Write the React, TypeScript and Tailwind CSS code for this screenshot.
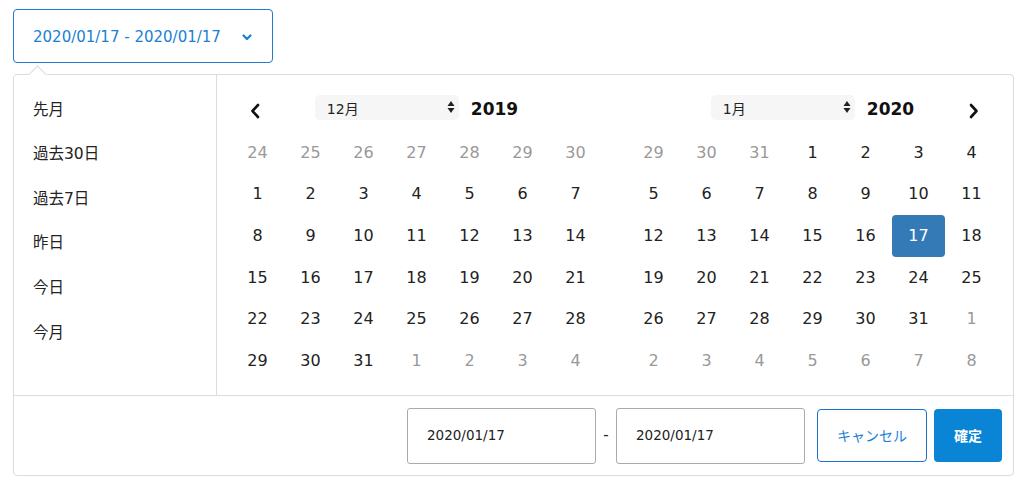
import React from "react";

const FONT = { fontFamily: '"DejaVu Sans", "Noto Sans CJK JP", sans-serif' };
const JP = { fontFamily: '"Noto Sans CJK JP", sans-serif' };

type Day = { d: number; muted?: boolean; sel?: boolean };

const dec: Day[] = [
  ...[24, 25, 26, 27, 28, 29, 30].map((d) => ({ d, muted: true })),
  ...Array.from({ length: 31 }, (_, i) => ({ d: i + 1 })),
  ...[1, 2, 3, 4].map((d) => ({ d, muted: true })),
];

const jan: Day[] = [
  ...[29, 30, 31].map((d) => ({ d, muted: true })),
  ...Array.from({ length: 31 }, (_, i) => ({ d: i + 1, sel: i + 1 === 17 })),
  ...[1, 2, 3, 4, 5, 6, 7, 8].map((d) => ({ d, muted: true })),
];

function SelectArrows() {
  return (
    <svg width="8" height="14" viewBox="0 0 8 14" className="absolute right-[4px] top-[5px]">
      <path d="M4 1 L7.5 6 L0.5 6 Z" fill="#222" />
      <path d="M4 13 L7.5 8 L0.5 8 Z" fill="#222" />
    </svg>
  );
}

function Chevron({ dir }: { dir: "left" | "right" }) {
  return (
    <svg width="10" height="16" viewBox="0 0 10 16">
      {dir === "left" ? (
        <path d="M8 2 L2.5 8 L8 14" stroke="#111" strokeWidth="2.6" fill="none" strokeLinecap="round" strokeLinejoin="round" />
      ) : (
        <path d="M2 2 L7.5 8 L2 14" stroke="#111" strokeWidth="2.6" fill="none" strokeLinecap="round" strokeLinejoin="round" />
      )}
    </svg>
  );
}

function Calendar({ month, year, days, side }: { month: string; year: string; days: Day[]; side: "left" | "right" }) {
  return (
    <div className="w-[371px]">
      <div className="relative flex h-[25px] items-center justify-center gap-[12px]">
        {side === "left" && (
          <div className="absolute left-[19px] top-[8px]">
            <Chevron dir="left" />
          </div>
        )}
        {side === "right" && (
          <div className="absolute right-[19px] top-[8px]">
            <Chevron dir="right" />
          </div>
        )}
        <div className="relative flex h-[25px] w-[144px] items-center rounded-[5px] bg-[#f6f6f6] pl-[12px] text-[14px] text-[#222]">
          <span className="translate-y-[2px]">{month}</span>
          <SelectArrows />
        </div>
        <div className="translate-y-[2px] text-[17px] font-bold text-[#111]">{year}</div>
      </div>
      <div className="mt-[12px] grid grid-cols-7">
        {days.map((x, i) => (
          <div
            key={i}
            className={
              "flex h-[41.6px] items-center justify-center text-[16px] " +
              (x.sel
                ? "rounded-[4px] bg-[#337ab7] text-white"
                : x.muted
                ? "text-[#999]"
                : "text-[#222]")
            }
          >
            {x.d}
          </div>
        ))}
      </div>
    </div>
  );
}

export default function App() {
  const presets = ["先月", "過去30日", "過去7日", "昨日", "今日", "今月"];
  return (
    <div className="h-[488px] w-[1024px] bg-white pl-[13px] pt-[9px]" style={FONT}>
      <div className="flex h-[54px] w-[260px] items-center justify-between rounded-[4px] border border-[#2279d1] pl-[19px] pr-[20px] pt-[2px] text-[15px] text-[#1a7fd6]">
        <span>2020/01/17 - 2020/01/17</span>
        <svg width="10" height="7" viewBox="0 0 10 7">
          <path d="M1.5 1.5 L5 5 L8.5 1.5" stroke="#1a7fd6" strokeWidth="2.2" fill="none" strokeLinecap="round" strokeLinejoin="round" />
        </svg>
      </div>
      <div className="relative mt-[11px] w-[1001px] rounded-[4px] border border-[#dcdcdc] bg-white">
        <div className="absolute left-[17px] top-[-7.5px] h-[13px] w-[13px] rotate-45 border-l border-t border-[#dcdcdc] bg-white" />
        <div className="flex h-[321px] border-b border-[#dcdcdc]">
          <div className="w-[203px] border-r border-[#dcdcdc] pl-[19px] pt-[13px]">
            {presets.map((p) => (
              <div key={p} className="flex h-[44.6px] items-center text-[15.5px] text-[#222]">
                {p}
              </div>
            ))}
          </div>
          <div className="flex flex-1 gap-[25px] pl-[14px] pt-[20px]">
            <Calendar month="12月" year="2019" days={dec} side="left" />
            <Calendar month="1月" year="2020" days={jan} side="right" />
          </div>
        </div>
        <div className="flex h-[79px] items-center justify-end pr-[11px]">
          <div className="flex h-[56px] w-[189px] items-center rounded-[3px] border border-[#aaa] pl-[19px] text-[13.5px] text-[#222]">
            2020/01/17
          </div>
          <div className="flex w-[20px] justify-center text-[15px] text-[#222]">-</div>
          <div className="flex h-[56px] w-[189px] items-center rounded-[3px] border border-[#aaa] pl-[19px] text-[13.5px] text-[#222]">
            2020/01/17
          </div>
          <button style={JP} className="ml-[12px] flex h-[53px] w-[110px] items-center justify-center rounded-[4px] border border-[#1a73c8] bg-white text-[14px] text-[#1a7fd6]">
            キャンセル
          </button>
          <button style={JP} className="ml-[7px] flex h-[53px] w-[68px] items-center justify-center rounded-[4px] bg-[#0a84d4] text-[14px] font-bold text-white">
            確定
          </button>
        </div>
      </div>
    </div>
  );
}
